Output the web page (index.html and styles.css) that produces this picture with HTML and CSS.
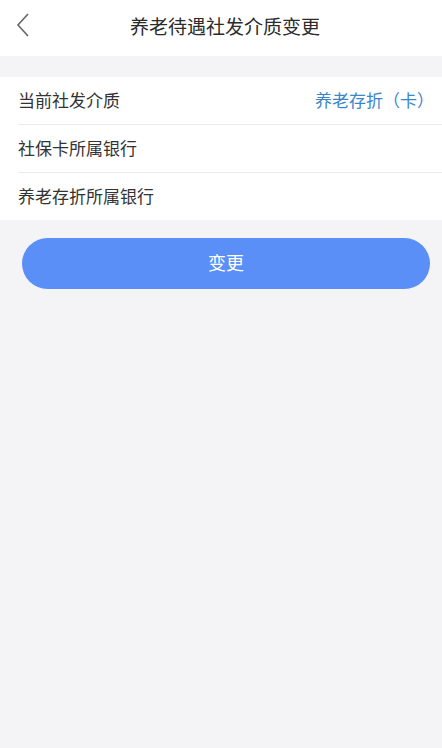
FILE: index.html
```html
<!DOCTYPE html>
<html lang="zh-CN">
<head>
    <meta charset="UTF-8">
    <meta name="viewport" content="width=device-width, initial-scale=1.0">
    <title>养老待遇社发介质变更</title>
    <link rel="stylesheet" href="styles.css">
</head>
<body>
    <div class="header">
        <a class="back" href="#">
            <svg width="14" height="24" viewBox="0 0 14 24">
                <path d="M12 1 L2 12 L12 23" fill="none" stroke="#666" stroke-width="1.6"/>
            </svg>
        </a>
        <h1>养老待遇社发介质变更</h1>
    </div>

    <div class="list">
        <div class="row">
            <span class="label">当前社发介质</span>
            <span class="value">养老存折（卡）</span>
        </div>
        <div class="row">
            <span class="label">社保卡所属银行</span>
        </div>
        <div class="row">
            <span class="label">养老存折所属银行</span>
        </div>
    </div>

    <div class="actions">
        <button type="button" class="btn">变更</button>
    </div>
</body>
</html>
```

FILE: styles.css
```css
body {
    margin: 0;
    padding: 0;
    background-color: #f4f4f6;
    font-family: "Noto Sans CJK SC", "Noto Sans", sans-serif;
    color: #333;
}

.header {
    height: 50px;
    padding: 0 0 6px 8px;
    background-color: #fff;
    display: flex;
    align-items: center;
    justify-content: center;
    position: relative;
}

.back {
    position: absolute;
    left: 16px;
    top: 13px;
    display: flex;
}

.header h1 {
    margin: 0;
    font-size: 19px;
    font-weight: normal;
    color: #2b2b2b;
}

.list {
    margin-top: 21px;
    background-color: #fff;
    padding-left: 18px;
}

.row {
    height: 47px;
    display: flex;
    align-items: center;
    justify-content: space-between;
    padding-right: 8px;
    border-bottom: 1px solid #ebebeb;
    font-size: 17px;
}

.row:last-child {
    border-bottom: none;
}

.label {
    position: relative;
    top: -1px;
}

.value {
    color: #3b86c8;
    position: relative;
    top: -1px;
}

.actions {
    padding: 18px 12px 0 22px;
}

.btn {
    width: 100%;
    height: 51px;
    border: none;
    border-radius: 26px;
    background-color: #5a8ff8;
    color: #fff;
    font-size: 18px;
    font-family: inherit;
    padding: 0 0 3px;
    cursor: pointer;
}
```
